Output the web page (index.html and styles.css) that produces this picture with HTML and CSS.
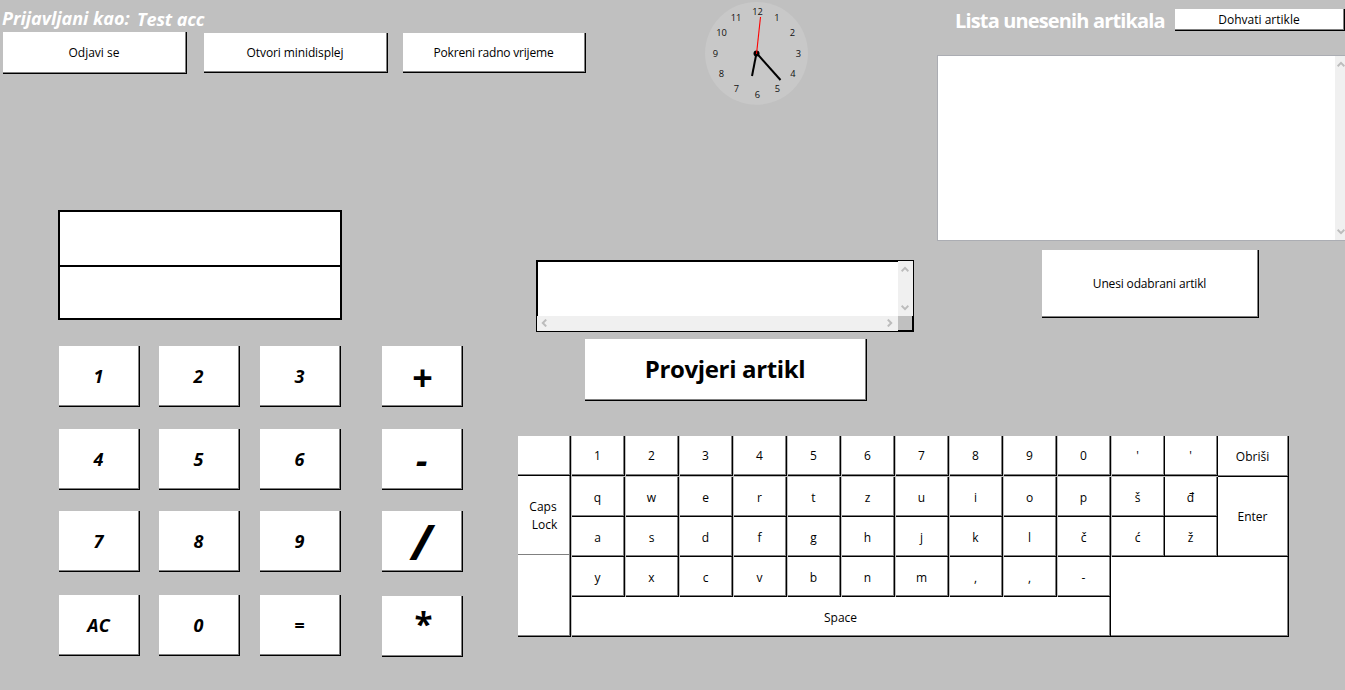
FILE: index.html
```html
<!DOCTYPE html>
<html lang="hr">
<head>
<meta charset="utf-8">
<title>Blagajna</title>
<link rel="stylesheet" href="styles.css">
</head>
<body>
<main class="app">
  <header class="topbar">
    <div class="session">
      <div class="user"><span class="user-label">Prijavljani kao:</span><span class="user-name">Test acc</span></div>
      <div class="actions">
        <button class="btn logout">Odjavi se</button>
        <button class="btn mini">Otvori minidisplej</button>
        <button class="btn start">Pokreni radno vrijeme</button>
      </div>
    </div>
    <svg class="clock" width="104" height="104" viewBox="0 0 104 104">
      <circle cx="51.5" cy="52.3" r="51.4" fill="#c8c8c8"/>
      <g class="numerals">
        <text x="52.5" y="14">12</text><text x="72" y="20">1</text><text x="87.5" y="35">2</text>
        <text x="93.500" y="56">3</text><text x="88" y="76">4</text><text x="72.500" y="91">5</text>
        <text x="52.5" y="97">6</text><text x="31.500" y="91">7</text><text x="16.500" y="76">8</text>
        <text x="10.500" y="56">9</text><text x="16.500" y="35">10</text><text x="31" y="20">11</text>
      </g>
      <path d="M51.5 52L47 75" stroke="#000" stroke-width="2"/>
      <path d="M51.5 52L75.5 79" stroke="#000" stroke-width="2"/>
      <circle cx="51.5" cy="52.5" r="3" fill="#000"/>
      <path d="M51.5 53L55.5 16" stroke="#f00" stroke-width="1.1"/>
    </svg>
  </header>

  <section class="items">
    <div class="items-head">
      <h2 class="items-title">Lista unesenih artikala</h2>
      <button class="btn fetch">Dohvati artikle</button>
    </div>
    <div class="list">
      <div class="scroll-v">
        <svg class="chev" viewBox="0 0 8 6"><path d="M.6 5.2L4 1.8L7.4 5.2"/></svg>
        <svg class="chev" viewBox="0 0 8 6"><path d="M.6 .8L4 4.2L7.4 .8"/></svg>
      </div>
    </div>
    <button class="btn insert">Unesi odabrani artikl</button>
  </section>

  <section class="calculator">
    <div class="display"><div class="line"></div><div class="line"></div></div>
    <div class="pad">
      <button class="btn">1</button><button class="btn">2</button><button class="btn">3</button><button class="btn op plus">+</button>
      <button class="btn">4</button><button class="btn">5</button><button class="btn">6</button><button class="btn op minus">-</button>
      <button class="btn">7</button><button class="btn">8</button><button class="btn">9</button><button class="btn op slash">/</button>
      <button class="btn">AC</button><button class="btn">0</button><button class="btn">=</button><button class="btn op star">*</button>
    </div>
  </section>

  <section class="check">
    <div class="entry">
      <div class="entry-text"></div>
      <div class="scroll-v">
        <svg class="chev" viewBox="0 0 8 6"><path d="M.6 5.2L4 1.8L7.4 5.2"/></svg>
        <svg class="chev" viewBox="0 0 8 6"><path d="M.6 .8L4 4.2L7.4 .8"/></svg>
      </div>
      <div class="scroll-h">
        <svg class="chev side" viewBox="0 0 6 8"><path d="M5.2 .6L1.8 4L5.2 7.4"/></svg>
        <svg class="chev side" viewBox="0 0 6 8"><path d="M.8 .6L4.2 4L.8 7.4"/></svg>
      </div>
      <div class="corner"></div>
    </div>
    <button class="btn verify">Provjeri artikl</button>
  </section>

  <section class="keyboard">
    <div class="side-left">
      <button class="btn"></button>
      <button class="btn caps"><span>Caps<br>&nbsp;Lock</span></button>
      <button class="btn"></button>
    </div>
    <div class="keys">
      <div class="row first"><button class="btn">1</button><button class="btn">2</button><button class="btn">3</button><button class="btn">4</button><button class="btn">5</button><button class="btn">6</button><button class="btn">7</button><button class="btn">8</button><button class="btn">9</button><button class="btn">0</button></div>
      <div class="row"><button class="btn">q</button><button class="btn">w</button><button class="btn">e</button><button class="btn">r</button><button class="btn">t</button><button class="btn">z</button><button class="btn">u</button><button class="btn">i</button><button class="btn">o</button><button class="btn">p</button></div>
      <div class="row"><button class="btn">a</button><button class="btn">s</button><button class="btn">d</button><button class="btn">f</button><button class="btn">g</button><button class="btn">h</button><button class="btn">j</button><button class="btn">k</button><button class="btn">l</button><button class="btn">č</button></div>
      <div class="row"><button class="btn">y</button><button class="btn">x</button><button class="btn">c</button><button class="btn">v</button><button class="btn">b</button><button class="btn">n</button><button class="btn">m</button><button class="btn">,</button><button class="btn">,</button><button class="btn">-</button></div>
      <button class="btn space">Space</button>
    </div>
    <div class="side-right">
      <div class="extra">
        <div class="letters">
          <button class="btn">'</button><button class="btn">'</button>
          <button class="btn">š</button><button class="btn">đ</button>
          <button class="btn">ć</button><button class="btn">ž</button>
        </div>
        <div class="control">
          <button class="btn erase">Obriši</button>
          <button class="btn enter">Enter</button>
        </div>
      </div>
      <button class="btn blank"></button>
    </div>
  </section>
</main>
</body>
</html>
```
FILE: styles.css
```css
* { box-sizing: border-box; }

body {
  margin: 0;
  background: #c0c0c0;
  font-family: "Open Sans", "Noto Sans", sans-serif;
  font-size: 12px;
  color: #000;
  overflow: hidden;
}

.app {
  width: 1345px;
  height: 690px;
  display: grid;
  grid-template-columns: 518px 419px 408px;
  grid-template-rows: 110px 326px 254px;
  overflow: hidden;
}

.btn {
  display: flex;
  align-items: center;
  justify-content: center;
  margin: 0;
  padding: 0 2px 0 0;
  border: 0;
  border-radius: 0;
  background: #fff;
  box-shadow: inset -1px -1px #000, inset -2px -2px #808080;
  font: inherit;
  line-height: 18px;
  color: inherit;
  white-space: nowrap;
}

/* Session bar */
.topbar { grid-column: 1 / 3; grid-row: 1; display: flex; }
.session { width: 705px; padding-left: 3px; }
.user {
  height: 32px;
  display: flex;
  color: #fff;
  font-size: 18px;
  font-weight: 700;
  font-style: italic;
  white-space: nowrap;
  line-height: 24px;
  margin-left: -1px;
}
.user-label { width: 135px; padding-top: 6px; letter-spacing: -0.03px; }
.user-name { padding-top: 7px; letter-spacing: -0.1px; }
.actions { display: flex; align-items: center; height: 42px; }
.logout { width: 184px; height: 42px; }
.mini { width: 184px; height: 40px; margin-left: 17px; letter-spacing: -0.1px; }
.start { width: 183px; height: 40px; margin-left: 15px; letter-spacing: -0.2px; }
.clock { margin-top: 1px; flex: none; }
.numerals { font-size: 9.3px; text-anchor: middle; fill: #111; }

/* Item list */
.items { grid-column: 3; grid-row: 1 / 3; }
.items-head { display: flex; height: 55px; padding: 9px 0 0 18px; }
.items-title {
  flex: none;
  width: 220px;
  margin: 0;
  color: #fff;
  font-size: 20px;
  line-height: 24px;
  white-space: nowrap;
  letter-spacing: -0.85px;
}
.fetch { width: 170px; height: 22px; flex: none; }
.list {
  width: 416px;
  height: 186px;
  border: 1px solid #abadb3;
  border-right: 0;
  background: #fff;
  padding-left: 397px;
}
.list .scroll-v { height: 184px; width: 17px; padding: 5px 0 5px 2px; align-items: flex-start; }
.insert { width: 217px; height: 68px; margin: 9px 0 0 105px; letter-spacing: -0.15px; }

.scroll-v, .scroll-h { display: flex; justify-content: space-between; align-items: center; background: #f0f0f0; }
.scroll-v { flex-direction: column; padding: 5px 1px 5px 0; }
.scroll-h { padding: 0 5px 2px 4px; }
.chev { width: 8px; height: 6px; fill: none; stroke: #bcbcbc; stroke-width: 2; flex: none; }
.chev.side { width: 6px; height: 8px; }

/* Calculator */
.calculator { grid-column: 1; grid-row: 2 / 4; padding: 100px 0 0 58px; }
.display { width: 284px; height: 110px; border: 2px solid #000; background: #fff; }
.line { height: 51px; }
.line:first-child { height: 55px; border-bottom: 2px solid #000; }
.pad {
  display: grid;
  grid-template-columns: 100px 101px 122px 81px;
  grid-template-rows: 83px 82px 84px 62px;
  margin: 26px 0 0 1px;
}
.pad .btn {
  width: 81px;
  height: 61px;
  padding-bottom: 2px;
  font-size: 18px;
  font-weight: 700;
  font-style: italic;
}
.pad .op { font-size: 36px; font-style: normal; padding-bottom: 0; }
.pad .plus { padding: 2px 0 0; }
.pad .minus, .pad .slash { font-style: italic; }
.pad .slash { font-size: 48px; }
.pad .star { margin-top: 1px; font-size: 33px; padding: 0 0 6px 2px; }

/* Item check */
.check { grid-column: 2; grid-row: 2; padding: 150px 0 0 18px; }
.entry {
  display: grid;
  grid-template-columns: 361px 15px;
  grid-template-rows: 55px 15px;
  width: 378px;
  height: 72px;
  border: 1px solid #000;
}
.entry-text { background: #fff; box-shadow: inset 1px 1px #000; }
.corner { box-shadow: inset -1px -1px #000; }
.verify {
  width: 282px;
  height: 62px;
  margin: 7px 0 0 49px;
  padding-bottom: 2px;
  font-size: 24px;
  font-weight: 700;
  letter-spacing: -0.35px;
}

/* On-screen keyboard */
.keyboard { grid-column: 2 / 4; grid-row: 3; display: flex; height: 201px; }
.side-left { width: 54px; display: grid; grid-template-rows: 40px 79px 82px; }
.side-left .btn { width: 53px; }
.side-left .caps { box-shadow: inset -1px 0 #000, inset -2px -1px #808080; text-align: center; padding-right: 3px; }
.row { display: flex; gap: 1px; height: 40px; }
.row.first { margin-bottom: 1px; }
.row .btn { width: 53px; height: 40px; }
.row:not(.first) .btn, .letters .btn:nth-child(n+3), .keys .space { padding-top: 1px; }
.keys { width: 539px; }
.space { width: 539px; height: 40px; }
.extra { display: flex; height: 121px; }
.letters {
  display: grid;
  grid-template-columns: 53px 53px;
  grid-template-rows: 41px 40px 40px;
  padding-left: 1px;
}
.letters .btn:nth-child(-n+2) { margin-bottom: 1px; }
.control { display: grid; grid-template-rows: 41px 80px; width: 71px; }
.blank { width: 178px; height: 80px; }
```
